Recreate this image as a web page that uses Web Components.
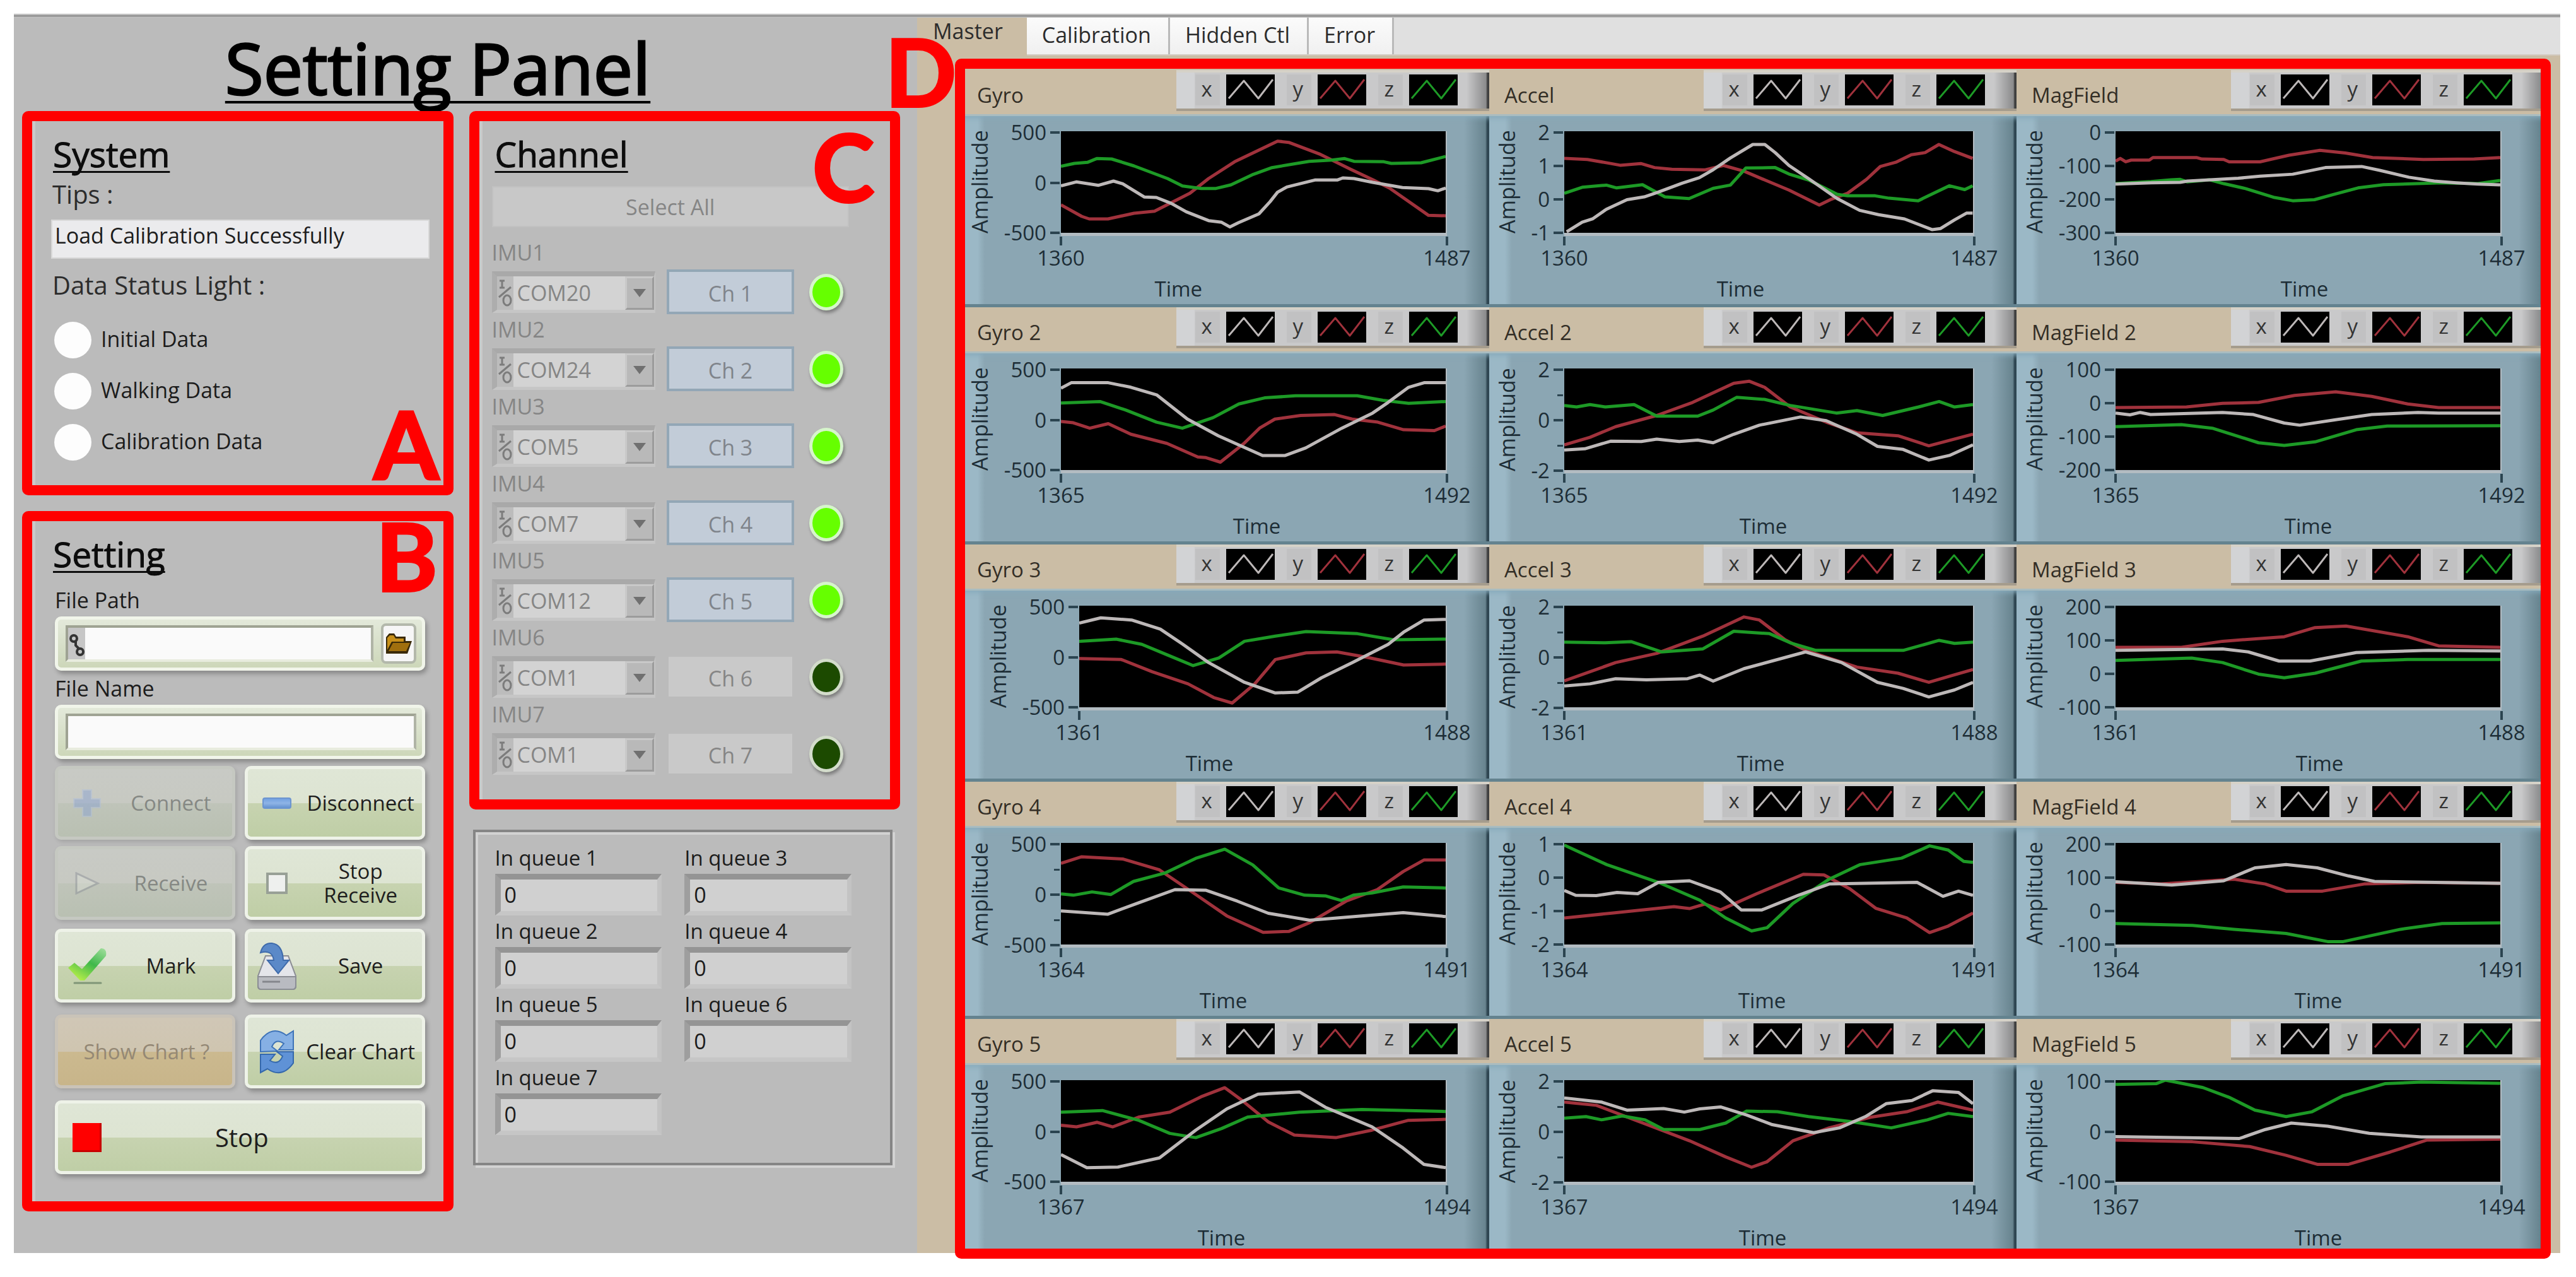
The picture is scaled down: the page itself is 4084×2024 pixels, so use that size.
<!DOCTYPE html>
<html lang="en">
<head>
<meta charset="utf-8">
<title>Setting Panel</title>
<style>
  body { margin: 0; background: #fff; color: #1c1c1c; font-family: "Open Sans", "Noto Sans", sans-serif; font-size: 34px; line-height: 40px; }
</style>
</head>
<body>
<app-shell>
  <h1 slot="title">Setting Panel</h1>
  <marked-frame slot="left" letter="A"><system-panel></system-panel></marked-frame>
  <marked-frame slot="left" letter="B"><setting-panel></setting-panel></marked-frame>
  <marked-frame slot="middle" letter="C"><channel-panel></channel-panel></marked-frame>
  <queue-panel slot="middle"></queue-panel>
  <tab-strip slot="right"></tab-strip>
  <marked-frame slot="right" letter="D"><chart-board></chart-board></marked-frame>
</app-shell>

<script>
const BASE = `
  *, *::before, *::after { box-sizing: border-box; }
  :host { display: block; }
  h2 { margin: 0; padding-left: 3px; font-size: 55px; line-height: 60px; font-weight: 400; color: #0c0c0c; -webkit-text-stroke: 1px #0c0c0c;
       text-decoration: underline; text-decoration-thickness: 3px; text-underline-offset: 6px; text-decoration-skip-ink: none; }
  button, input, select { font: inherit; color: inherit; margin: 0; border-radius: 0; }
  svg { display: block; }
`;

function define(name, css, html, setup) {
  customElements.define(name, class extends HTMLElement {
    constructor() {
      super();
      this.attachShadow({ mode: "open" });
    }
    connectedCallback() {
      const body = typeof html === "function" ? html(this) : html;
      this.shadowRoot.innerHTML = `<style>${BASE}${css}</style>${body}`;
      if (setup) setup(this);
    }
  });
}

/* Window: control area on the left, chart area on the right */
define("app-shell", `
  :host { margin: 21px 25px 38px 22px; }
  .rule { height: 7px; background: linear-gradient(#e4e4e4 0 2px, #9c9c9c 2px 6px, #c6c6c6 6px); }
  .body { display: grid; grid-template-columns: minmax(0, 1432fr) minmax(0, 2605fr); }
  .controls { background: #bbb; padding: 14px 27px 0 13px; }
  .columns { display: grid; grid-template-columns: repeat(2, minmax(0, 1fr)); gap: 25px; align-items: start; margin-top: 4px; }
  .column { display: flex; flex-direction: column; gap: 25px; }
  .charts { background: #cbbda5; }
  ::slotted(h1) { margin: 0; padding-right: 74px; text-align: center; font-size: 111px; line-height: 130px; font-weight: 400; -webkit-text-stroke: 3px #000;
    color: #000; text-decoration: underline; text-decoration-thickness: 4px; text-underline-offset: 10px; text-decoration-skip-ink: none; }
`, `
  <div class="rule"></div>
  <div class="body">
    <section class="controls">
      <slot name="title"></slot>
      <div class="columns">
        <div class="column"><slot name="left"></slot></div>
        <div class="column"><slot name="middle"></slot></div>
      </div>
    </section>
    <section class="charts"><slot name="right"></slot></section>
  </div>
`);

/* Red call-out frame with its letter */
define("marked-frame", `
  :host { position: relative; border: 16px solid #f00; border-radius: 10px; }
  .clip { overflow: hidden; box-shadow: inset 5px 0 #c9c9c9; }
  .letter { position: absolute; z-index: 1; color: #f00; font: 700 148px/123px Lato, sans-serif; -webkit-text-stroke: 4px #f00; }
  :host([letter="A"]) .letter { right: 7px; bottom: 5px; }
  :host([letter="B"]) .letter { right: 9px; top: -7px; }
  :host([letter="C"]) .letter { right: 25px; top: 10px; }
  :host([letter="D"]) .letter { right: calc(100% + 14px); top: -58px; }
  :host([letter="D"]) { margin: 5px 15px -9px 60px; }
`, el => `<div class="clip"><slot></slot></div><span class="letter">${el.getAttribute("letter")}</span>`);

define("system-panel", `
  :host { padding: 22px 22px 39px 30px; }
  label, h3 { display: block; margin: 10px 0 0; padding-left: 2px; font-size: 40px; line-height: 48px; font-weight: 400; color: #2c2c2c; }
  input { display: block; width: 100%; height: 62px; margin-top: 16px; padding: 0 4px 12px; border: 2px solid #d8d8d8; background: #ebebed; }
  h3 { margin-top: 18px; }
  ul { list-style: none; margin: 34px 0 0; padding: 0 0 0 5px; display: grid; gap: 23px; }
  li { display: flex; gap: 15px; }
  i { width: 59px; height: 58px; border-radius: 50%; background: #fdfdfd; }
  li span { line-height: 54px; }
`, `
  <h2>System</h2>
  <label for="tips">Tips :</label>
  <input id="tips" readonly value="Load Calibration Successfully">
  <h3>Data Status Light :</h3>
  <ul>
    <li><i></i><span>Initial Data</span></li>
    <li><i></i><span>Walking Data</span></li>
    <li><i></i><span>Calibration Data</span></li>
  </ul>
`);

const ICONS = {
  plus: `<svg width="44" height="44" viewBox="0 0 44 44"><path d="M15 1h14v14h14v14H29v14H15V29H1V15h14z" fill="#7d9bd8" stroke="#a9bce2" stroke-width="2"/></svg>`,
  minus: `<svg width="46" height="18" viewBox="0 0 46 18"><defs><linearGradient id="g" x2="0" y2="1"><stop stop-color="#6f9fe0"/><stop offset=".5" stop-color="#8fb4e6"/><stop offset="1" stop-color="#5f8fce"/></linearGradient></defs><rect x="1" y="1" width="44" height="16" rx="3" fill="url(#g)" stroke="#6c94cf" stroke-width="2"/></svg>`,
  play: `<svg width="40" height="36" viewBox="0 0 40 36"><path d="M3 2v32L37 18z" fill="#dfe3da" stroke="#7f8490" stroke-width="3"/></svg>`,
  square: `<svg width="34" height="34" viewBox="0 0 34 34"><rect x="2" y="2" width="30" height="30" fill="#eef0ee" stroke="#98a096" stroke-width="4"/></svg>`,
  check: `<svg width="64" height="60" viewBox="0 0 64 60"><defs><linearGradient id="c" x1="1" x2=".3" y2="1"><stop stop-color="#a5e0a0"/><stop offset=".5" stop-color="#3fb84a"/><stop offset="1" stop-color="#b6ee4a"/></linearGradient></defs><path d="M12 57h42" stroke="#7f9577" stroke-width="3" stroke-linecap="round"/><path d="M2 33l10-8 12 10L54 2q10 0 8 12L28 53h-7z" fill="url(#c)"/></svg>`,
  save: `<svg width="66" height="76" viewBox="0 0 66 76"><path d="M15 22h36l12 32v16q0 5-5 5H8q-5 0-5-5V54z" fill="#e4e5ea" stroke="#8b8d94" stroke-width="2"/><path d="M3 55h60v14q0 6-5 6H8q-5 0-5-6z" fill="#b9bbc1" stroke="#8b8d94" stroke-width="2"/><path d="M10 63h28" stroke="#84868c" stroke-width="3"/><path d="M7 17Q11 1 25 2q17 2 18 27h9L35 50 18 29h10q-2-17-21-12z" fill="#5b89c8" stroke="#3f6bab" stroke-width="2"/></svg>`,
  refresh: `<svg width="56" height="70" viewBox="0 0 56 70"><path d="M2 35V17Q20-8 43 9l11-7v30H31l8-10Q26 13 20 27l9 7z" fill="#86b0e4" stroke="#3e73b8" stroke-width="2"/><path d="M54 35v18Q36 78 13 62L2 68V39h23l-8 10q14 8 20-7l-9-7z" fill="#5f92d6" stroke="#3468ac" stroke-width="2"/></svg>`,
  stop: `<svg width="46" height="46" viewBox="0 0 46 46"><path d="M0 0h46v46H0z" fill="#c80000"/><path d="M0 0h43v43H0z" fill="#f00"/></svg>`
};

define("panel-button", `
  button { display: grid; grid-template-columns: 72px minmax(0, 1fr); align-items: center; width: 100%; height: 117px;
    padding: 0 0 0 10px; font-size: 33px; line-height: 38px; border: 5px solid #eef2e8; border-radius: 10px;
    background: linear-gradient(#dfe6d6, #dde4d2 50%, #c7d3b0 51%, #bfcea6); box-shadow: 3px 5px 7px #0004; color: #1e1e1e; }
  svg { margin: 0 auto; }
  span { text-align: center; }
  button:disabled { background: linear-gradient(#c8cac5, #c7c9c2 50%, #bfc4b9 51%, #b9c0b2); border-color: #c5c8c1; box-shadow: 2px 3px 6px #0002; color: #858884; }
  button:disabled svg { opacity: .4; }
  :host([plain]) button { grid-template-columns: 1fr; padding: 0 0 0 5px; background: linear-gradient(#d0c7b6, #cfc5b0 50%, #cbb98f 51%, #c8b58a); border-color: #c9c3b8; color: #948875; }
  :host([wide]) { grid-column: 1 / -1; }
  :host([wide]) button { grid-template-columns: 72px minmax(0, 1fr) 76px; font-size: 40px; }
`, el => {
  const icon = ICONS[el.getAttribute("icon")] || "";
  return `<button type="button" ${el.hasAttribute("off") ? "disabled" : ""}>${icon}<span><slot></slot></span></button>`;
});

define("setting-panel", `
  :host { padding: 22px 29px 43px 30px; }
  .form { padding-left: 6px; }
  label { display: block; margin: 8px 0 6px; }
  h2 + .form label:first-child { margin-top: 23px; }
  .well { display: flex; align-items: center; gap: 12px; height: 86px; padding: 0 9px 0 12px; border: 5px solid #f1f5ea; border-radius: 10px;
    background: linear-gradient(#e3e9da, #cdd7b9); box-shadow: 3px 5px 7px #0004; }
  .field { display: flex; flex: 1; min-width: 0; height: 58px; border: 4px solid #9fa393; border-right-color: #b0b4a6; border-bottom-color: #e8ecde; background: #fafafa; }
  .field svg { flex: none; background: #c6c6c6; }
  input { flex: 1; min-width: 0; border: 0; padding: 0 8px; background: none; }
  .browse { display: grid; place-items: center; width: 56px; height: 64px; padding: 0; border: 4px solid #b3b8ab; border-radius: 8px; background: #f6f6f6; }
  .grid { display: grid; grid-template-columns: repeat(2, minmax(0, 1fr)); column-gap: 15px; row-gap: 10px; margin-top: 11px; }
  .grid + .grid { margin-top: 14px; row-gap: 19px; }
`, `
  <h2>Setting</h2>
  <div class="form">
    <label for="path">File Path</label>
    <div class="well">
      <div class="field">
        <svg width="27" height="50" viewBox="0 0 27 50"><g fill="none" stroke="#333" stroke-width="4"><circle cx="9" cy="17" r="5"/><circle cx="19" cy="38" r="5"/><path d="M12 21v7l5 5"/></g></svg>
        <input id="path">
      </div>
      <button class="browse" type="button" aria-label="Browse">
        <svg width="44" height="34" viewBox="0 0 44 34"><path d="M2 33V7l5-6h8l3 5h15v7h10L36 33z" fill="#3a2a08"/><path d="M4 27V8l4-4h6l3 5h13v5H11z" fill="#c8901a"/><path d="M13 16h27l-6 13H6z" fill="#a06f0e"/></svg>
      </button>
    </div>
    <label for="name">File Name</label>
    <div class="well"><div class="field"><input id="name"></div></div>
    <div class="grid">
      <panel-button icon="plus" off>Connect</panel-button>
      <panel-button icon="minus">Disconnect</panel-button>
      <panel-button icon="play" off>Receive</panel-button>
      <panel-button icon="square">Stop<br>Receive</panel-button>
    </div>
    <div class="grid">
      <panel-button icon="check">Mark</panel-button>
      <panel-button icon="save">Save</panel-button>
      <panel-button plain off>Show Chart ?</panel-button>
      <panel-button icon="refresh">Clear Chart</panel-button>
      <panel-button icon="stop" wide>Stop</panel-button>
    </div>
  </div>
`);

define("channel-row", `
  :host { color: #858585; }
  label { display: block; }
  .row { display: grid; grid-template-columns: minmax(0, 1fr) 202px 54px; column-gap: 18px; align-items: center; height: 71px; margin-top: 7px; padding-right: 15px; }
  .port { display: grid; grid-template-columns: 26px minmax(0, 1fr) 46px; height: 66px; border: 8px solid #a9a9a9; border-right: 2px solid #c4c4c4; border-bottom: 5px solid #c6c6c6; border-left-color: #adadad; background: #bcbcbc; }
  .io { place-self: center; }
  select { grid-area: 1 / 2 / 2 / 4; appearance: none; opacity: 1; width: 100%; border: 0; padding: 0 50px 0 6px; background: #d3d3d3; color: #858585; }
  .arrow { grid-area: 1 / 3; display: grid; place-items: center; pointer-events: none; background: #b9b9b9; border: 3px solid #c9c9c9; border-right-color: #9c9c9c; border-bottom-color: #9c9c9c; }
  button { height: 71px; padding: 4px 0 0; border: 4px solid #93a7b6; background: #c2ccd8; color: #7f848b; }
  .led { width: 54px; height: 58px; margin-left: 6px; border: 5px solid #d6f5cb; border-radius: 50%; background: #66ff00; box-shadow: 2px 4px 5px #0005; }
  :host([idle]) button { height: 63px; margin: 0 3px; border: 0; background: #c9c9c9; color: #858585; }
  :host([idle]) .led { background: #1c4a00; border-color: #d3dccb; }
`, el => {
  const n = el.getAttribute("number");
  return `
  <label for="port">IMU${n}</label>
  <div class="row">
    <div class="port">
      <svg class="io" width="24" height="46" viewBox="0 0 24 46"><g fill="none" stroke="#7c7c7c" stroke-width="3"><path d="M3 4h8M7 4v11M3 15h8M2 30L21 14"/><ellipse cx="15" cy="35" rx="6" ry="8"/></g></svg>
      <select id="port" disabled><option>${el.getAttribute("port")}</option></select>
      <span class="arrow"><svg width="22" height="14" viewBox="0 0 22 14"><path d="M1 1h20L11 14z" fill="#707070"/></svg></span>
    </div>
    <button type="button" disabled>Ch ${n}</button>
    <span class="led"></span>
  </div>`;
});

define("channel-panel", `
  :host { padding: 22px 65px 37px 20px; }
  h2 { padding-left: 5px; }
  .all { display: block; width: 100%; height: 65px; margin: 21px 0 20px; padding: 0; border: 2px solid #c1c1c1; background: #c8c8c8; color: #858585; }
  .list { display: grid; gap: 4px; }
`, () => {
  const ports = ["COM20", "COM24", "COM5", "COM7", "COM12", "COM1", "COM1"];
  return `<h2>Channel</h2><button class="all" type="button" disabled>Select All</button><div class="list">` +
    ports.map((p, i) => `<channel-row number="${i + 1}" port="${p}" ${i > 4 ? "idle" : ""}></channel-row>`).join("") + `</div>`;
});

define("queue-panel", `
  :host { margin: 7px 12px 0 6px; padding: 21px 61px 44px 31px; border: 4px solid #858585; box-shadow: 4px 4px #d2d2d2, inset 4px 4px #d2d2d2; }
  .grid { display: grid; grid-template-columns: repeat(2, minmax(0, 1fr)); gap: 5px 36px; }
  label { display: block; font-size: 33px; }
  input { display: block; width: 100%; height: 66px; margin-top: 5px; padding: 0 6px 2px; border: 9px solid #949494; border-right: 7px solid #c3c3c3; border-bottom: 7px solid #c6c6c6; border-left-color: #9e9e9e; background: #d0d0d0; }
`, () => `<div class="grid">` + [1, 3, 2, 4, 5, 6, 7].map(n =>
  `<div><label for="q${n}">In queue ${n}</label><input id="q${n}" readonly value="0"></div>`).join("") + `</div>`);

define("tab-strip", `
  nav { display: flex; height: 60px; background: #e0e0e0; border-bottom: 2px solid #d3ccc3; }
  button { border: 0; border-right: 3px solid #b9b9b9; padding: 0 27px 5px 24px; background: linear-gradient(#fbfbfb, #f0f0f0); color: #2c2c2c; }
  button[aria-selected=true] { margin-bottom: -2px; padding: 0 38px 18px 25px; border: 0; background: #cbbda5; }
`, `
  <nav role="tablist">
    <button role="tab" aria-selected="true">Master</button>
    <button role="tab">Calibration</button>
    <button role="tab">Hidden Ctl</button>
    <button role="tab">Error</button>
  </nav>
`);

/* Each chart: tick labels, time range, viewBox of its plot, centre of the time caption, and x / y / z traces */
const GYRO = ["500", "0", "-500"];
const CHARTS = [
  { name: "Gyro", kind: "gyro", ticks: GYRO, from: 1360, to: 1487, time: 343, box: "404 625 1032 483",
    x: "404,885 445,866 505,882 545,862 570,875 628,938 660,940 700,968 740,1008 800,1050 835,1058 857,1080 880,1060 935,1018 965,960 985,915 1010,890 1085,857 1145,857 1160,847 1190,850 1240,868 1320,893 1390,898 1415,908 1436,895",
    y: "404,975 460,1030 480,1042 530,1042 600,1015 655,1005 700,965 750,920 800,850 870,770 985,672 1015,678 1100,735 1180,805 1240,855 1285,895 1390,1025 1436,1027",
    z: "404,792 440,778 475,773 500,755 540,757 600,790 690,850 730,885 780,897 820,897 860,880 920,830 970,798 1070,768 1130,762 1165,755 1190,768 1270,770 1290,778 1370,775 1436,745" },
  { name: "Accel", kind: "accel", ticks: ["2", "1", "0", "-1"], from: 1360, to: 1487, time: 398, box: "218 625 1186 475",
    x: "225,1095 270,1050 300,1035 340,990 400,945 450,932 490,910 560,868 610,842 650,805 700,750 765,687 800,687 830,725 870,785 930,850 1010,940 1075,995 1130,1015 1205,1035 1285,1085 1310,1080 1350,1040 1385,1008 1403,1008",
    y: "218,752 285,757 350,775 380,784 440,776 480,795 530,803 625,806 680,785 740,812 800,853 870,900 958,970 990,945 1040,915 1095,850 1135,790 1180,770 1225,735 1265,725 1305,687 1350,720 1403,752",
    z: "218,915 270,887 340,877 370,890 445,875 510,932 580,940 650,892 700,877 745,797 830,795 870,825 930,855 1010,920 1040,927 1120,927 1160,938 1245,950 1290,915 1335,880 1380,898 1403,880" },
  { name: "MagField", kind: "mag", ticks: ["0", "-100", "-200", "-300"], from: 1360, to: 1487, time: 456, box: "302 625 1060 475",
    x: "302,872 400,866 480,864 500,858 640,845 700,835 790,826 880,795 980,790 1030,808 1110,840 1180,858 1240,866 1300,872 1362,876",
    y: "302,765 315,752 330,768 345,760 395,760 405,748 525,748 540,755 600,757 615,768 700,768 780,737 865,714 935,727 1010,748 1150,757 1290,755 1362,748",
    z: "302,870 400,860 455,852 480,850 500,862 560,852 600,870 660,893 740,935 790,950 850,945 900,922 970,890 1040,875 1200,866 1300,870 1362,855" },

  { name: "Gyro 2", kind: "gyro", ticks: GYRO, from: 1365, to: 1492, time: 467, box: "112 213 374 335",
    x: "112,278 122,260 158,260 180,275 205,300 235,380 265,435 308,500 330,500 350,475 385,410 415,360 430,325 450,275 465,260 486,260",
    y: "112,388 124,392 140,410 158,395 180,430 215,460 245,505 253,507 267,522 290,460 305,410 320,380 345,368 378,365 395,380 420,390 445,415 475,418 486,403",
    z: "112,327 150,322 175,350 205,390 230,410 260,375 285,330 310,310 340,303 400,303 425,318 450,328 486,322" },
  { name: "Accel 2", kind: "accel", ticks: ["2", "", "0", "", "-2"], from: 1365, to: 1492, time: 434, box: "600 213 398 335",
    x: "600,482 620,478 645,453 675,454 690,446 712,454 730,449 745,458 765,430 790,400 830,373 855,385 885,430 905,470 930,480 955,515 975,500 998,465",
    y: "600,465 625,440 650,405 690,368 725,325 765,262 780,255 795,275 820,340 855,390 885,425 925,435 955,468 998,430",
    z: "600,335 612,340 625,332 640,340 668,332 690,370 730,370 745,350 768,308 795,315 820,335 865,360 885,352 910,368 945,340 965,322 980,340 998,332" },
  { name: "MagField 2", kind: "mag", ticks: ["100", "0", "-100", "-200"], from: 1365, to: 1492, time: 462, box: "1136 213 374 335",
    x: "1136,360 1150,366 1160,358 1170,365 1240,358 1270,365 1300,393 1315,400 1350,382 1385,365 1430,358 1450,360 1510,360",
    y: "1136,342 1205,340 1240,328 1275,325 1310,302 1350,290 1385,305 1420,330 1450,342 1510,342",
    z: "1136,405 1200,398 1230,410 1275,458 1300,467 1330,455 1370,415 1400,403 1510,402" },

  { name: "Gyro 3", kind: "gyro inset", ticks: GYRO, from: 1361, to: 1488, time: 392, box: "129 988 357 334",
    x: "129,1045 150,1028 180,1035 208,1065 230,1115 255,1175 290,1240 320,1275 342,1272 365,1225 395,1175 430,1115 445,1075 465,1035 486,1033",
    y: "129,1162 170,1165 200,1205 235,1245 260,1290 278,1308 300,1245 320,1165 350,1143 380,1140 410,1158 445,1183 486,1180",
    z: "129,1105 165,1098 190,1115 215,1150 240,1185 265,1160 290,1105 320,1088 350,1073 400,1080 435,1100 486,1098" },
  { name: "Accel 3", kind: "accel", ticks: ["2", "", "0", "", "-2"], from: 1361, to: 1488, time: 430, box: "600 988 398 334",
    x: "600,1252 625,1245 650,1228 680,1232 720,1228 732,1216 745,1236 775,1195 835,1140 870,1175 905,1240 930,1260 955,1288 980,1265 998,1240",
    y: "600,1235 650,1175 690,1145 735,1088 775,1025 790,1035 815,1100 835,1135 885,1190 925,1210 955,1240 975,1220 998,1198",
    z: "600,1108 640,1110 665,1106 695,1140 735,1130 765,1072 800,1080 820,1110 845,1135 930,1135 965,1102 980,1112 998,1108" },
  { name: "MagField 3", kind: "mag", ticks: ["200", "100", "0", "-100"], from: 1361, to: 1488, time: 480, box: "1136 988 374 334",
    x: "1136,1135 1240,1130 1265,1140 1295,1170 1325,1170 1370,1142 1440,1135 1510,1137",
    y: "1136,1125 1200,1125 1240,1105 1300,1090 1330,1060 1360,1055 1420,1090 1450,1120 1510,1125",
    z: "1136,1168 1210,1160 1240,1175 1275,1213 1300,1225 1330,1210 1375,1170 1420,1165 1510,1165" },

  { name: "Gyro 4", kind: "gyro", ticks: ["500", "", "0", "", "-500"], from: 1364, to: 1491, time: 414, box: "110 223 371 309",
    x: "110,430 155,440 185,405 220,365 250,367 280,400 310,437 350,458 400,445 440,435 481,447",
    y: "110,285 130,265 170,272 205,305 240,380 270,445 305,495 330,492 350,465 385,400 415,365 440,310 460,275 481,275",
    z: "110,378 122,382 140,372 158,380 180,340 210,315 240,270 268,242 295,290 320,360 345,382 365,384 380,398 392,382 410,375 440,357 481,360" },
  { name: "Accel 4", kind: "accel", ticks: ["1", "0", "-1", "-2"], from: 1364, to: 1491, time: 432, box: "594 223 395 314",
    x: "594,370 605,385 625,386 645,376 665,380 685,345 715,340 745,375 765,430 785,430 820,385 850,350 935,345 960,388 975,372 989,385",
    y: "594,455 640,440 700,420 715,426 730,412 745,430 780,380 825,320 845,322 870,365 895,425 925,455 947,500 965,480 989,440",
    z: "594,230 635,290 685,345 725,400 750,455 775,495 790,485 815,410 850,335 880,290 920,270 947,232 965,245 980,280 989,283" },
  { name: "MagField 4", kind: "mag", ticks: ["200", "100", "0", "-100"], from: 1364, to: 1491, time: 478, box: "1126 223 370 314",
    x: "1126,343 1180,353 1230,340 1260,300 1290,290 1320,300 1350,325 1375,342 1496,348",
    y: "1126,345 1170,350 1240,335 1270,350 1290,372 1325,372 1365,350 1420,345 1496,348",
    z: "1126,472 1200,478 1240,490 1290,503 1330,528 1345,528 1400,490 1440,472 1496,470" },

  { name: "Gyro 5", kind: "gyro", ticks: GYRO, from: 1367, to: 1494, time: 411, box: "110 957 371 311",
    x: "110,1185 135,1225 165,1223 205,1195 240,1110 270,1045 300,1000 340,993 365,1040 410,1100 440,1165 460,1215 481,1225",
    y: "110,1095 125,1100 145,1086 160,1100 185,1070 215,1055 245,1008 268,980 285,1020 310,1085 335,1125 375,1133 410,1110 445,1080 481,1077",
    z: "110,1055 150,1050 185,1080 215,1120 240,1133 265,1105 290,1070 340,1055 400,1047 481,1053" },
  { name: "Accel 5", kind: "accel", ticks: ["2", "", "0", "", "-2"], from: 1367, to: 1494, time: 433, box: "594 957 395 315",
    x: "594,1012 630,1025 655,1050 690,1045 710,1056 725,1046 745,1040 770,1065 795,1095 835,1120 860,1105 885,1070 905,1030 930,1020 950,990 975,995 989,1030",
    y: "594,1025 625,1035 670,1090 715,1145 750,1195 775,1227 790,1210 815,1145 850,1105 890,1072 925,1055 955,1025 989,1050",
    z: "594,1075 615,1070 630,1080 650,1068 672,1080 690,1110 725,1110 750,1090 770,1053 800,1055 830,1070 870,1085 910,1105 945,1080 965,1060 989,1070" },
  { name: "MagField 5", kind: "mag", ticks: ["100", "0", "-100"], from: 1367, to: 1494, time: 478, box: "1126 957 370 315",
    x: "1126,1132 1245,1138 1270,1110 1295,1090 1330,1100 1370,1122 1420,1133 1496,1133",
    y: "1126,1143 1200,1148 1255,1163 1290,1190 1320,1218 1350,1218 1390,1180 1425,1143 1496,1140",
    z: "1126,970 1165,968 1174,957 1182,962 1210,980 1235,1010 1260,1050 1290,1070 1315,1055 1345,1005 1385,968 1420,963 1496,967" }
];

const COLOURS = { x: "#bdb8b8", y: "#a0323c", z: "#1d9a26" };

define("wave-chart", `
  :host { --axis: 157px; --inset: 0px; --end: 67px; color: #1d2d36; }
  :host(.accel) { --axis: 119px; }
  :host(.inset) { --axis: 186px; --inset: 29px; }
  header { display: flex; align-items: flex-start; height: 70px; color: #332e26; }
  h3 { flex: 337 1 0; margin: 0; padding: 20px 0 0 24px; font: inherit; font-size: 33px; }
  .legend { flex: 498 1 0; display: flex; height: 65px; padding: 7px 0 9px 30px; color: #333;
    background: linear-gradient(90deg, #d2d3d5 28px, #c9c9ca 30px, #c9c9ca calc(100% - 36px), #8b8b8c calc(100% - 5px), #404040 calc(100% - 3px)); box-shadow: inset 0 4px #d6d2c8, inset 0 -4px #a59c8d; }
  .legend span { display: flex; align-items: center; width: 145px; gap: 10px; padding-right: 19px; justify-content: flex-end; line-height: 46px; }
  .legend b { flex: 1; padding-left: 10px; font-weight: 400; font-size: 33px; background: #c1c1c2; height: 49px; }
  .legend svg { width: 77px; height: 49px; background: #000; }
  .panel { height: 306px; padding-top: 27px;
    background: linear-gradient(90deg, #9bb8c6 25px, #8ba6b3 36px, #8ba6b3 calc(100% - 40px), #68848f calc(100% - 6px), #2c434e calc(100% - 3px)); box-shadow: inset 0 3px #a9bcc0, inset 0 12px 8px -6px #86aabb, inset 0 -5px #64838f; }
  .plot-row { display: grid; grid-template-columns: var(--axis) minmax(0, 1fr) var(--end); height: 161px; }
  .scale { display: grid; grid-template-columns: 56px minmax(0, 1fr); padding-left: var(--inset); }
  .amp { writing-mode: vertical-rl; transform: rotate(180deg); text-align: center; line-height: 56px; margin: -4px 0; white-space: nowrap; }
  .ticks { display: flex; flex-direction: column; justify-content: space-between; margin: -18px 0 -20px; }
  .ticks span { display: flex; align-items: center; justify-content: flex-end; gap: 6px; height: 40px; padding-right: 2px; font-size: 33px; }
  .ticks i { width: 15px; height: 4px; background: #2b4450; }
  .ticks .minor i { width: 9px; height: 3px; }
  .plot { width: 100%; height: 161px; background: #000; box-shadow: 0 5px #b3bcc2; border-right: 2px solid #b3bcc2; }
  polyline { fill: none; stroke-width: 5; stroke-linejoin: round; vector-effect: non-scaling-stroke; }
  .range { display: flex; justify-content: space-between; margin: 6px calc(var(--end) - 40px) 0 calc(var(--axis) - 40px); font-size: 33px; }
  .range span { width: 80px; text-align: center; }
  .range span::before { content: ""; display: block; width: 4px; height: 14px; margin: 0 auto; background: #2b4450; }
  .time { display: grid; margin-top: 9px; font-size: 33px; }
  .time span { grid-column: 2; }
`, el => {
  const c = CHARTS[el.getAttribute("index")];
  const legend = ["x", "y", "z"].map(k => `<span><b>${k}</b><svg viewBox="0 0 77 49"><polyline points="4,38 28,10 51,38 74,8" style="stroke:${COLOURS[k]};stroke-width:3"/></svg></span>`).join("");
  const ticks = c.ticks.map(t => t ? `<span>${t}<i></i></span>` : `<span class="minor"><i></i></span>`).join("");
  const traces = ["y", "z", "x"].map(k => `<polyline points="${c[k]}" stroke="${COLOURS[k]}"/>`).join("");
  return `
  <header><h3>${c.name}</h3><div class="legend">${legend}</div></header>
  <div class="panel">
    <div class="plot-row">
      <div class="scale"><div class="amp">Amplitude</div><div class="ticks">${ticks}</div></div>
      <svg class="plot" viewBox="${c.box}" preserveAspectRatio="none">${traces}</svg>
    </div>
    <div class="range"><span>${c.from}</span><span>${c.to}</span></div>
    <div class="time" style="grid-template-columns:${c.time - 38}fr auto ${797 - c.time}fr"><span>Time</span></div>
  </div>`;
}, el => {
  el.className = CHARTS[el.getAttribute("index")].kind;
});

define("chart-board", `
  :host { background: #cbbda5; }
  .grid { display: grid; grid-template-columns: repeat(3, minmax(0, 1fr)); margin: 0 -5px -12px; padding-top: 2px; }
`, () => `<div class="grid">` + CHARTS.map((c, i) => `<wave-chart index="${i}"></wave-chart>`).join("") + `</div>`);
</script>
</body>
</html>
